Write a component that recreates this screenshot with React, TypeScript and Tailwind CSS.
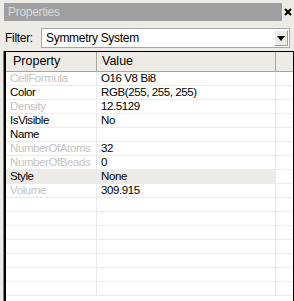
import React from "react";

type Row = { name: string; value: string; disabled?: boolean; selected?: boolean };

const rows: Row[] = [
  { name: "CellFormula", value: "O16 V8 Bi8", disabled: true },
  { name: "Color", value: "RGB(255, 255, 255)" },
  { name: "Density", value: "12.5129", disabled: true },
  { name: "IsVisible", value: "No" },
  { name: "Name", value: "" },
  { name: "NumberOfAtoms", value: "32", disabled: true },
  { name: "NumberOfBeads", value: "0", disabled: true },
  { name: "Style", value: "None", selected: true },
  { name: "Volume", value: "309.915", disabled: true },
];

const font = { fontFamily: '"Liberation Sans", Arial, sans-serif' };

export default function App() {
  const empty = Array.from({ length: 7 });

  return (
    <div className="w-[294px] h-[301px] overflow-hidden bg-[#ecebe6] flex flex-col text-[11px] tracking-[-0.3px] text-black" style={font}>
      {/* title bar */}
      <div className="mt-[3px] h-[18px] flex items-center">
        <div className="ml-[4px] w-[278px] h-full bg-[#9f9f9f] text-[#dadada] text-[12px] flex items-center pl-[4px]">Properties</div>
        <div className="flex-1 flex justify-center items-center">
          <svg width="8" height="8" viewBox="0 0 8 8">
            <path d="M1 1 L7 7 M7 1 L1 7" stroke="#000" strokeWidth="2" />
          </svg>
        </div>
      </div>

      {/* filter */}
      <div className="mt-[7px] h-[20px] flex items-center">
        <div className="pl-[5px] w-[41px] text-[12px]">Filter:</div>
        <div className="w-[249px] h-full bg-white border border-[#a7a6aa] flex items-center">
          <div className="flex-1 pl-[4px] text-[12px]">Symmetry System</div>
          <div className="w-[14px] h-[16px] mr-[1px] bg-[#ecebe6] border-t border-l border-white border-r border-b border-r-[#9d9d9d] border-b-[#9d9d9d] flex items-center justify-center">
            <svg width="8" height="5" viewBox="0 0 8 5">
              <path d="M0 0 H8 L4 5 Z" fill="#000" />
            </svg>
          </div>
        </div>
      </div>

      {/* grid */}
      <div className="mt-[3px] ml-[3px] w-[291px] flex-1 border-l border-l-[#808080]">
        <div className="h-full border-t border-l-2 border-r border-black bg-white flex flex-col">
          <div className="h-[20px] flex bg-[#ecebe6] border-b border-[#a7a6a0] text-[12.5px] tracking-normal">
            <div className="w-[91px] pl-[7px] flex items-center border-r border-[#a7a6a0]">Property</div>
            <div className="w-[179px] pl-[5px] flex items-center border-r border-[#a7a6a0]">Value</div>
            <div className="flex-1" />
          </div>
          {rows.map((r) => (
            <div key={r.name} className="h-[14px] flex border-b border-[#ebebeb] leading-[13px] text-[11.5px] tracking-[-0.4px]">
              <div className={`w-[91px] pl-[4px] whitespace-nowrap overflow-hidden border-r border-[#ebebeb] ${r.selected ? "bg-[#ecebe6]" : ""} ${r.disabled ? "text-[#c4c4c4]" : ""}`}>{r.name}</div>
              <div className={`w-[179px] pl-[4px] border-r border-[#ebebeb] ${r.selected ? "bg-[#ecebe6]" : ""}`}>{r.value}</div>
              <div className="flex-1" />
            </div>
          ))}
          {empty.map((_, i) => (
            <div key={i} className="h-[14px] flex border-b border-[#ebebeb]">
              <div className="w-[91px] border-r border-[#ebebeb]" />
              <div className="w-[179px] border-r border-[#ebebeb]" />
              <div className="flex-1" />
            </div>
          ))}
        </div>
      </div>
    </div>
  );
}
